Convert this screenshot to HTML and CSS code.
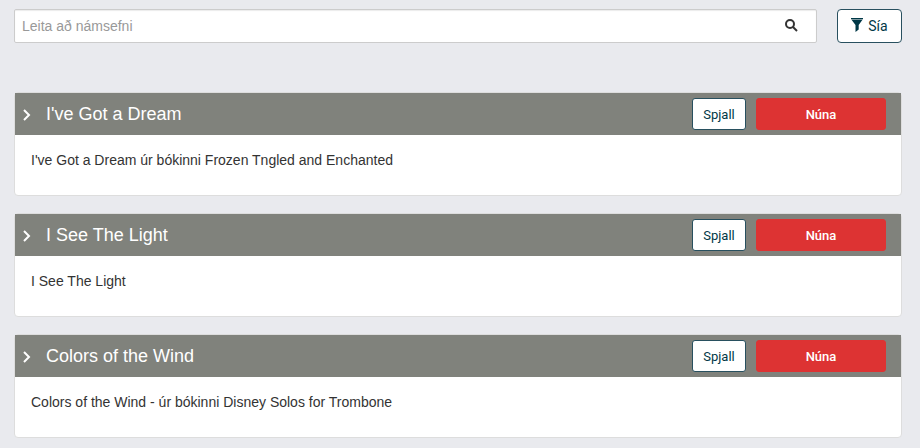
FILE: index.html
```html
<!DOCTYPE html>
<html lang="is">

<head>
    <meta charset="UTF-8">
    <meta name="viewport" content="width=device-width, initial-scale=1.0">
    <title>Námsefni</title>
    <link rel="stylesheet" href="styles.css">
</head>

<body>
    <form class="search-bar">
        <div class="search-box">
            <input type="text" id="search" name="search" placeholder="Leita að námsefni" aria-label="Leita að námsefni">
            <button type="submit" class="search-button" aria-label="Leita">
                <svg width="14" height="14" viewBox="0 0 14 14">
                    <circle cx="6" cy="6" r="4" fill="none" stroke="#333" stroke-width="2" />
                    <path d="M9 9l4 4" stroke="#333" stroke-width="2" />
                </svg>
            </button>
        </div>
        <button type="button" class="btn filter-button">
            <svg width="12" height="14" viewBox="0 0 12 14">
                <path d="M0 0h12v1.3H0zM0.5 1.8h11L7.7 7v4.5L4.5 14V7z" fill="#003847" />
            </svg>
            Sía
        </button>
    </form>

    <main class="materials">
        <section class="panel">
            <div class="panel-heading">
                <svg class="chevron" width="8" height="12" viewBox="0 0 8 12">
                    <path d="M1 1l5 5-5 5" />
                </svg>
                <h2>I've Got a Dream</h2>
                <button type="button" class="btn chat-button">Spjall</button>
                <button type="button" class="btn now-button">Núna</button>
            </div>
            <p class="panel-body">I've Got a Dream úr bókinni Frozen Tngled and Enchanted</p>
        </section>

        <section class="panel">
            <div class="panel-heading">
                <svg class="chevron" width="8" height="12" viewBox="0 0 8 12">
                    <path d="M1 1l5 5-5 5" />
                </svg>
                <h2>I See The Light</h2>
                <button type="button" class="btn chat-button">Spjall</button>
                <button type="button" class="btn now-button">Núna</button>
            </div>
            <p class="panel-body">I See The Light</p>
        </section>

        <section class="panel">
            <div class="panel-heading">
                <svg class="chevron" width="8" height="12" viewBox="0 0 8 12">
                    <path d="M1 1l5 5-5 5" />
                </svg>
                <h2>Colors of the Wind</h2>
                <button type="button" class="btn chat-button">Spjall</button>
                <button type="button" class="btn now-button">Núna</button>
            </div>
            <p class="panel-body">Colors of the Wind - úr bókinni Disney Solos for Trombone</p>
        </section>
    </main>
</body>

</html>
```

FILE: styles.css
```css
* {
    box-sizing: border-box;
}

body {
    margin: 0;
    padding: 9px 18px 10px 14px;
    font-family: "Liberation Sans", Arial, sans-serif;
    font-size: 14px;
    line-height: 20px;
    color: #333;
    background-color: #e9eaee;
}

.search-bar {
    display: flex;
    gap: 20px;
    margin-bottom: 49px;
}

.search-box {
    display: flex;
    flex: 1;
    height: 34px;
    background-color: #fff;
    border: 1px solid #ccc;
    border-radius: 2px;
    box-shadow: inset 0 1px 1px rgba(0, 0, 0, 0.08);
}

.search-box input {
    flex: 1;
    min-width: 0;
    padding: 0 7px;
    border: none;
    outline: none;
    background: transparent;
    font: inherit;
    color: #555;
}

.search-box input::placeholder {
    color: #999;
    opacity: 1;
}

.search-button {
    display: flex;
    align-items: center;
    padding: 0 18px 2px 12px;
    border: none;
    background: transparent;
    cursor: pointer;
}

.btn {
    display: flex;
    align-items: center;
    justify-content: center;
    height: 32px;
    padding: 0 10px;
    border: 1px solid #28505f;
    border-radius: 3px;
    background-color: #fff;
    color: #003847;
    font-family: Roboto, sans-serif;
    font-size: 13px;
    cursor: pointer;
}

.filter-button {
    gap: 5px;
    width: 65px;
    height: 34px;
    border-radius: 4px;
    font-size: 14px;
}

.filter-button svg {
    margin-bottom: 2px;
}

.panel {
    margin-bottom: 17px;
    background-color: #fff;
    border: 1px solid #ddd;
    border-radius: 4px;
}

.panel:last-child {
    margin-bottom: 0;
}

.panel-heading {
    display: flex;
    align-items: center;
    height: 42px;
    padding: 0 15px 0 8px;
    background-color: #80827c;
    color: #fff;
}

.panel-heading h2 {
    flex: 1;
    margin: 0;
    font-size: 18px;
    font-weight: normal;
}

.chevron {
    margin: 2px 15px 0 0;
    fill: none;
    stroke: #fff;
    stroke-width: 2;
}

.chat-button {
    width: 54px;
    margin-right: 10px;
}

.now-button {
    width: 130px;
    border-color: #dd3333;
    background-color: #dd3333;
    color: #fff;
    font-weight: 500;
}

.panel-body {
    margin: 0;
    padding: 15px 16px 25px;
}
```
